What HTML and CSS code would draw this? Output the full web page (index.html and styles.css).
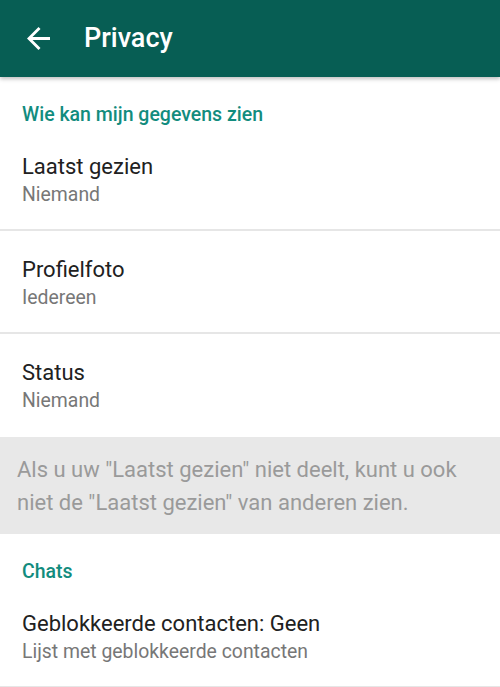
FILE: index.html
```html
<!DOCTYPE html>
<html lang="nl">
<head>
<meta charset="utf-8">
<title>Privacy</title>
<link rel="stylesheet" href="styles.css">
</head>
<body>

<div class="toolbar">
	<svg class="back" viewBox="4 4 16 16" width="23" height="23" aria-label="Terug">
		<path d="M20 11H7.83l5.59-5.59L12 4l-8 8 8 8 1.41-1.41L7.83 13H20v-2z" fill="#fff"/>
	</svg>
	<div class="title">Privacy</div>
</div>

<div class="section">Wie kan mijn gegevens zien</div>

<div class="item">
	<div class="item-title">Laatst gezien</div>
	<div class="item-sub">Niemand</div>
</div>
<div class="item">
	<div class="item-title">Profielfoto</div>
	<div class="item-sub">Iedereen</div>
</div>
<div class="item last">
	<div class="item-title">Status</div>
	<div class="item-sub">Niemand</div>
</div>

<div class="note">Als u uw "Laatst gezien" niet deelt, kunt u ook niet de "Laatst gezien" van anderen zien.</div>

<div class="section">Chats</div>

<div class="item">
	<div class="item-title">Geblokkeerde contacten: Geen</div>
	<div class="item-sub">Lijst met geblokkeerde contacten</div>
</div>

</body>
</html>
```

FILE: styles.css
```css
html, body {
	margin: 0;
	padding: 0;
	background: #fff;
	font-family: Roboto, "Noto Sans", sans-serif;
}

.toolbar {
	display: flex;
	align-items: center;
	height: 77px;
	background: #075e54;
	box-shadow: 0 2px 4px rgba(0, 0, 0, 0.25);
	position: relative;
}

.back {
	margin-left: 27px;
	margin-right: 34px;
}

.title {
	color: #fff;
	font-size: 27px;
	font-weight: 500;
	line-height: 77px;
}

.section {
	padding: 26px 22px 1px;
	font-size: 19.5px;
	line-height: 24px;
	font-weight: 500;
	color: #128c7e;
}

.item {
	padding: 25px 22px 20px;
	border-bottom: 2px solid #e6e6e6;
}

.item.last {
	border-bottom: 0;
	padding-bottom: 22px;
}

.item-title {
	font-size: 22px;
	line-height: 27px;
	color: #212121;
}

.item-sub {
	margin-top: 1px;
	font-size: 19.4px;
	line-height: 28px;
	color: #777;
}

.note {
	background: #e8e8e8;
	padding: 16px 17px 15px;
	font-size: 22px;
	line-height: 33px;
	color: #9a9a9a;
}
```
